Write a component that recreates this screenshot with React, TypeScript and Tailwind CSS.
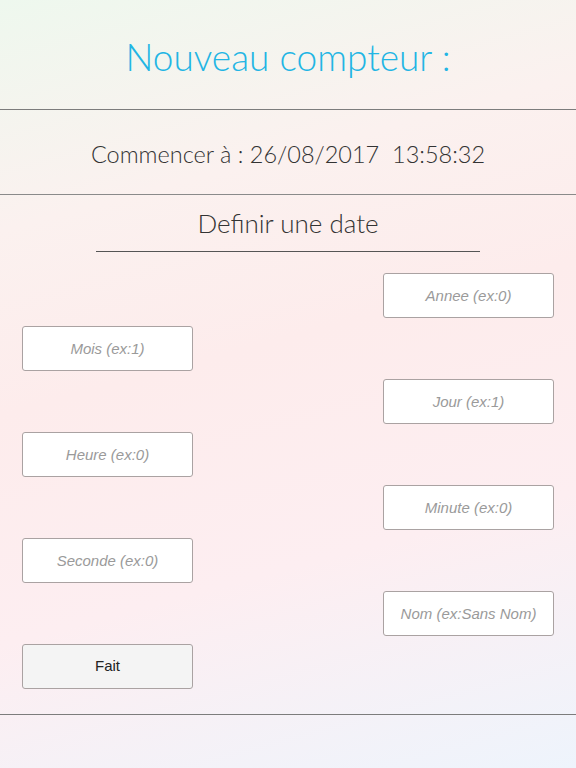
import React from 'react';

const fields: { label: string; side: 'left' | 'right' }[] = [
  { label: 'Annee (ex:0)', side: 'right' },
  { label: 'Mois (ex:1)', side: 'left' },
  { label: 'Jour (ex:1)', side: 'right' },
  { label: 'Heure (ex:0)', side: 'left' },
  { label: 'Minute (ex:0)', side: 'right' },
  { label: 'Seconde (ex:0)', side: 'left' },
  { label: 'Nom (ex:Sans Nom)', side: 'right' },
];

export default function App() {
  return (
    <div className="min-h-[768px] w-full bg-[linear-gradient(165deg,#eef8ee_0%,#fbf1ef_25%,#fdecec_45%,#fdeef1_70%,#eef4fc_100%)] font-['Lato',sans-serif] text-[#333]">
      <header className="flex h-[110px] items-center justify-center border-b border-[#7c7c7c] pt-[5px]">
        <h1 className="text-[37px] font-light text-[#22b5e4]">Nouveau compteur :</h1>
      </header>

      <div className="flex h-[85px] items-center justify-center border-b border-[#8a8a8a] pt-[5px]">
        <p className="text-[23.5px] font-light text-[#333]">
          Commencer à : 26/08/2017&nbsp;&nbsp;13:58:32
        </p>
      </div>

      <div className="border-b border-[#7c7c7c] px-[22px] pb-[25px]">
        <div className="mx-auto mt-[12px] w-[384px] border-b border-[#555] pb-[12px] text-center text-[26px] font-light leading-[32px] text-[#333]">
          Definir une date
        </div>

        <div className="mt-[21px] flex flex-col gap-[8px] font-['Liberation_Sans',sans-serif]">
          {fields.map((f) => (
            <input
              key={f.label}
              placeholder={f.label}
              className={`h-[45px] w-[171px] rounded-[3px] border border-[#aaa2a2] bg-white text-center text-[15px] italic text-[#555] outline-none placeholder:text-[#9a9a9a] ${
                f.side === 'right' ? 'self-end' : 'self-start'
              }`}
            />
          ))}
          <button className="h-[45px] w-[171px] self-start rounded-[3px] border border-[#aaa2a2] bg-[#f4f4f4] text-[15px] text-[#222]">
            Fait
          </button>
        </div>
      </div>
    </div>
  );
}
